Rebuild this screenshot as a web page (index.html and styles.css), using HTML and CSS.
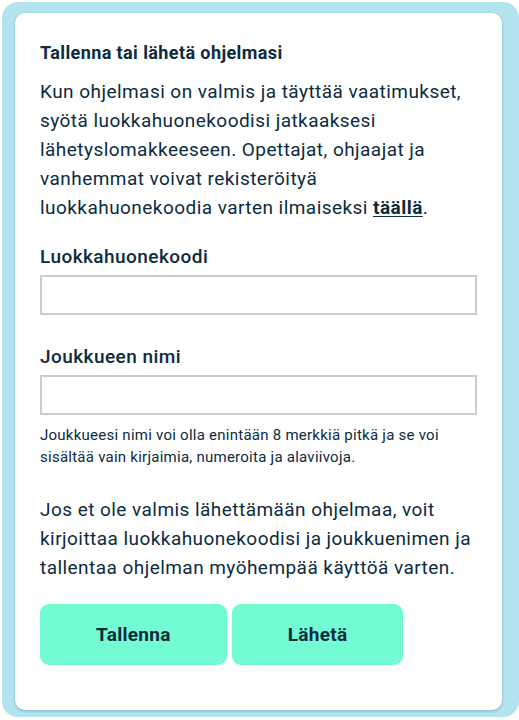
FILE: index.html
```html
<!DOCTYPE html>
<html lang="fi">
<head>
<meta charset="utf-8">
<link rel="stylesheet" href="styles.css">
</head>
<body>
<div class="frame">
  <div class="card">
    <h2 class="title">Tallenna tai lähetä ohjelmasi</h2>
    <p class="text">Kun ohjelmasi on valmis ja täyttää vaatimukset, syötä luokkahuonekoodisi jatkaaksesi lähetyslomakkeeseen. Opettajat, ohjaajat ja vanhemmat voivat rekisteröityä luokkahuonekoodia varten ilmaiseksi <a class="link" href="#">täällä</a>.</p>
    <label class="label" for="code">Luokkahuonekoodi</label>
    <input class="field" id="code" type="text">
    <label class="label label-second" for="team">Joukkueen nimi</label>
    <input class="field" id="team" type="text">
    <p class="help">Joukkueesi nimi voi olla enintään 8 merkkiä pitkä ja se voi sisältää vain kirjaimia, numeroita ja alaviivoja.</p>
    <p class="text text-note">Jos et ole valmis lähettämään ohjelmaa, voit kirjoittaa luokkahuonekoodisi ja joukkuenimen ja tallentaa ohjelman myöhempää käyttöä varten.</p>
    <div class="actions">
      <button class="btn" type="button">Tallenna</button>
      <button class="btn" type="button">Lähetä</button>
    </div>
  </div>
</div>
</body>
</html>
```
FILE: styles.css
```css
html, body {
  margin: 0;
  padding: 0;
  background: #ffffff;
}
body {
  padding: 2px 0 0 2px;
  font-family: Roboto, "Liberation Sans", sans-serif;
  color: #0c2b3e;
}
.frame {
  width: 517px;
  height: 715px;
  box-sizing: border-box;
  background: #b3e3ee;
  border-radius: 16px;
  padding: 11px 17px 7px 13px;
}
.card {
  height: 100%;
  box-sizing: border-box;
  background: #ffffff;
  border-radius: 10px;
  box-shadow: 0 1px 3px rgba(60, 120, 140, 0.45);
  padding: 28px 25px 0 25px;
  display: flex;
  flex-direction: column;
  align-items: flex-start;
}
.title {
  margin: 0;
  font-size: 18px;
  line-height: 24px;
  font-weight: 700;
  letter-spacing: 0.4px;
}
.text {
  margin: 12px 0 0 0;
  font-size: 19px;
  line-height: 29px;
  font-weight: 400;
  letter-spacing: 0.45px;
}
.link {
  color: inherit;
  font-weight: 700;
  text-decoration: underline;
  text-underline-offset: 2px;
}
.label {
  margin-top: 23px;
  font-size: 19px;
  line-height: 24px;
  font-weight: 500;
  letter-spacing: 0.45px;
}
.label-second {
  margin-top: 30px;
}
.field {
  margin-top: 6px;
  width: 437px;
  height: 40px;
  box-sizing: border-box;
  border: 2px solid #cccccc;
  border-radius: 0;
  padding: 0 10px;
  font: inherit;
  outline: none;
}
.help {
  margin: 9px 0 0 0;
  font-size: 15px;
  line-height: 22px;
  letter-spacing: 0.25px;
}
.text-note {
  margin-top: 27px;
}
.actions {
  display: flex;
  gap: 5px;
  margin-top: 22px;
}
.btn {
  height: 61px;
  padding: 0 56px;
  border: none;
  border-radius: 9px;
  background: #73fbd3;
  color: #0c2b3e;
  font-family: Roboto, "Liberation Sans", sans-serif;
  font-size: 19px;
  font-weight: 700;
  letter-spacing: 0.3px;
}
```
